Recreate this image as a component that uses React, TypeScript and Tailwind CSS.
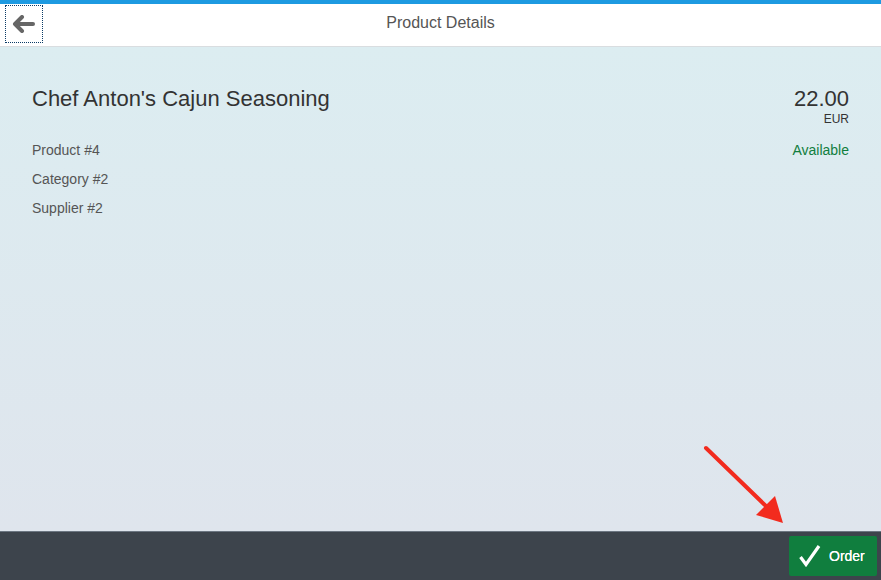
import React from "react";

export default function App() {
  return (
    <div
      className="w-[881px] h-[580px] flex flex-col overflow-hidden relative"
      style={{ fontFamily: '"Liberation Sans", Arial, sans-serif' }}
    >
      <div className="h-[4px] bg-[#1d9ae1]" />
      <header className="h-[43px] bg-white border-b border-[#d9dde0] flex items-center relative shrink-0">
        <button className="ml-[5px] mt-[-3px] w-[38px] h-[38px] border border-dotted border-[#0b3b66] flex items-center justify-center">
          <svg width="24" height="18" viewBox="0 0 24 18">
            <path d="M10 2 L3 9 L10 16" fill="none" stroke="#666" strokeWidth="4" strokeLinecap="round" strokeLinejoin="round" />
            <path d="M4 9 H21" stroke="#666" strokeWidth="4" strokeLinecap="round" />
          </svg>
        </button>
        <div className="absolute left-0 right-0 top-[7px] text-center text-[16px] text-[#555] pointer-events-none">
          Product Details
        </div>
      </header>
      <main className="flex-1 bg-gradient-to-b from-[#dcedf1] to-[#dfe5ed] px-[32px] pt-[40px]">
        <div className="flex justify-between">
          <div>
            <div className="text-[22px] text-[#333] leading-[26px] mt-[-1px]">Chef Anton's Cajun Seasoning</div>
            <div className="mt-[30px] flex flex-col gap-[12px] text-[14px] text-[#555] leading-[17px]">
              <div>Product #4</div>
              <div>Category #2</div>
              <div>Supplier #2</div>
            </div>
          </div>
          <div className="flex flex-col items-end">
            <div className="text-[22px] text-[#333] leading-[26px] mt-[-1px]">22.00</div>
            <div className="text-[12px] text-[#333] leading-[14px]">EUR</div>
            <div className="mt-[16px] text-[14px] text-[#107e3e] leading-[17px]">Available</div>
          </div>
        </div>
      </main>
      <footer className="h-[49px] bg-[#3d444c] border-t border-[#6c7681] flex items-center justify-end pr-[4px] shrink-0">
        <button className="w-[88px] h-[40px] bg-[#107e3e] rounded-[2px] flex items-center pl-[10px] gap-[8px] text-white text-[14px]">
          <svg width="22" height="22" viewBox="0 0 22 22">
            <path d="M1.5 12 L7 19.5 L20 1" fill="none" stroke="white" strokeWidth="3.2" strokeLinejoin="miter" />
          </svg>
          <span className="[text-shadow:0_0_0.4px_white]">Order</span>
        </button>
      </footer>
      <svg className="absolute left-0 top-0 pointer-events-none" width="881" height="580">
        <line x1="706" y1="448" x2="768" y2="508" stroke="#f22b1e" strokeWidth="4" strokeLinecap="round" />
        <polygon points="783,523 756,515 775,496" fill="#f22b1e" />
      </svg>
    </div>
  );
}
